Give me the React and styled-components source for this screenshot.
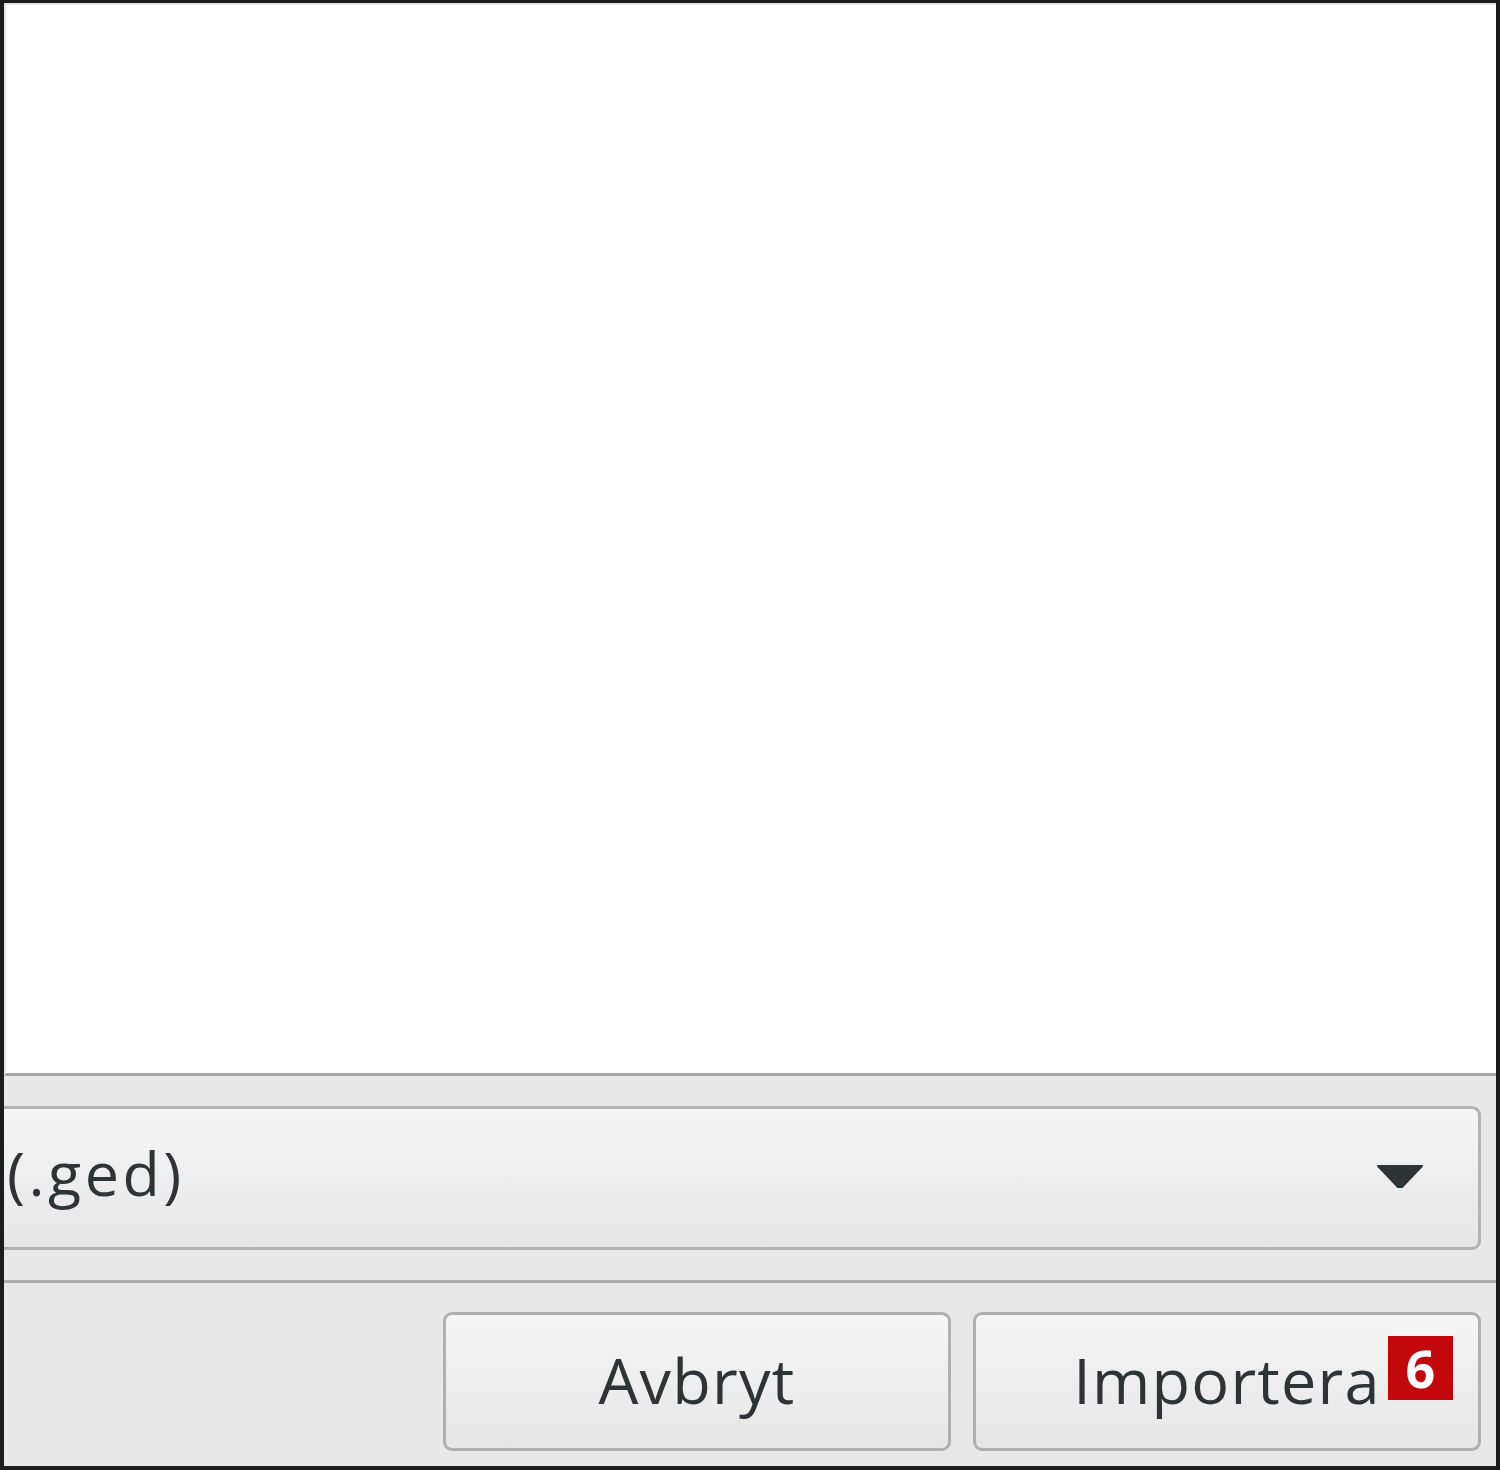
import React from "react";
import styled, { createGlobalStyle } from "styled-components";

const Global = createGlobalStyle`
  html, body { margin: 0; padding: 0; background: #e8e8e8; }
  #root { width: 1500px; height: 1470px; }
`;

const Frame = styled.div`
  box-sizing: border-box;
  width: 1500px;
  height: 1470px;
  border: 4px solid #1c1c1c;
  border-top-width: 3px;
  background: #e8e8e8;
  display: flex;
  flex-direction: column;
  overflow: hidden;
  font-family: "Open Sans", "Noto Sans", sans-serif;
  color: #2e3436;
`;

const FileArea = styled.div`
  flex: 1;
  background: #ffffff;
  border-top: 2px solid #e4e4e4;
  border-left: 2px solid #e4e4e4;
  border-bottom: 3px solid #a6a6a6;
`;

const FilterBar = styled.div`
  display: flex;
  padding: 30px 15px 30px 0;
  border-bottom: 3px solid #acacac;
`;

const Combo = styled.div`
  flex: 1;
  box-sizing: border-box;
  height: 144px;
  margin-left: -20px;
  padding: 0 54px 0 20px;
  display: flex;
  align-items: center;
  justify-content: space-between;
  border: 3px solid #b3b3b3;
  border-radius: 9px;
  background: linear-gradient(#f6f6f6, #e6e6e6);
  font-size: 61px;
  letter-spacing: 3.5px;
`;

const ComboText = styled.span`
  line-height: 1;
  margin-top: -12px;
`;

const Arrow = styled.svg`
  width: 48px;
  height: 24px;
  display: block;
  margin-top: -4px;
`;

const ButtonBar = styled.div`
  display: flex;
  justify-content: flex-end;
  gap: 22px;
  padding: 29px 15px 15px 0;
`;

const Button = styled.div`
  position: relative;
  box-sizing: border-box;
  width: 508px;
  height: 139px;
  display: flex;
  align-items: center;
  justify-content: center;
  border: 3px solid #b0b0b0;
  border-radius: 9px;
  background: linear-gradient(#f6f6f6, #e6e6e6);
  font-size: 63px;
  letter-spacing: 1.2px;
`;

const Label = styled.span`
  position: relative;
  line-height: 1;
  margin-top: -5px;
`;

const Badge = styled.span`
  position: absolute;
  left: calc(100% + 7px);
  top: -12px;
  width: 65px;
  height: 64px;
  background: #c3080d;
  color: #fff;
  font-weight: 700;
  font-size: 52px;
  letter-spacing: 0;
  display: flex;
  align-items: center;
  justify-content: center;
  line-height: 1;
`;

export default function App() {
  return (
    <>
      <Global />
      <Frame>
        <FileArea />
        <FilterBar>
          <Combo>
            <ComboText>(.ged)</ComboText>
            <Arrow viewBox="0 0 48 24">
              <path d="M2 2 H46 L26 23 H22 Z" fill="#2e3436" stroke="#2e3436" strokeWidth="2" strokeLinejoin="round" />
            </Arrow>
          </Combo>
        </FilterBar>
        <ButtonBar>
          <Button>
            <Label>Avbryt</Label>
          </Button>
          <Button>
            <Label>
              Importera
              <Badge>6</Badge>
            </Label>
          </Button>
        </ButtonBar>
      </Frame>
    </>
  );
}
